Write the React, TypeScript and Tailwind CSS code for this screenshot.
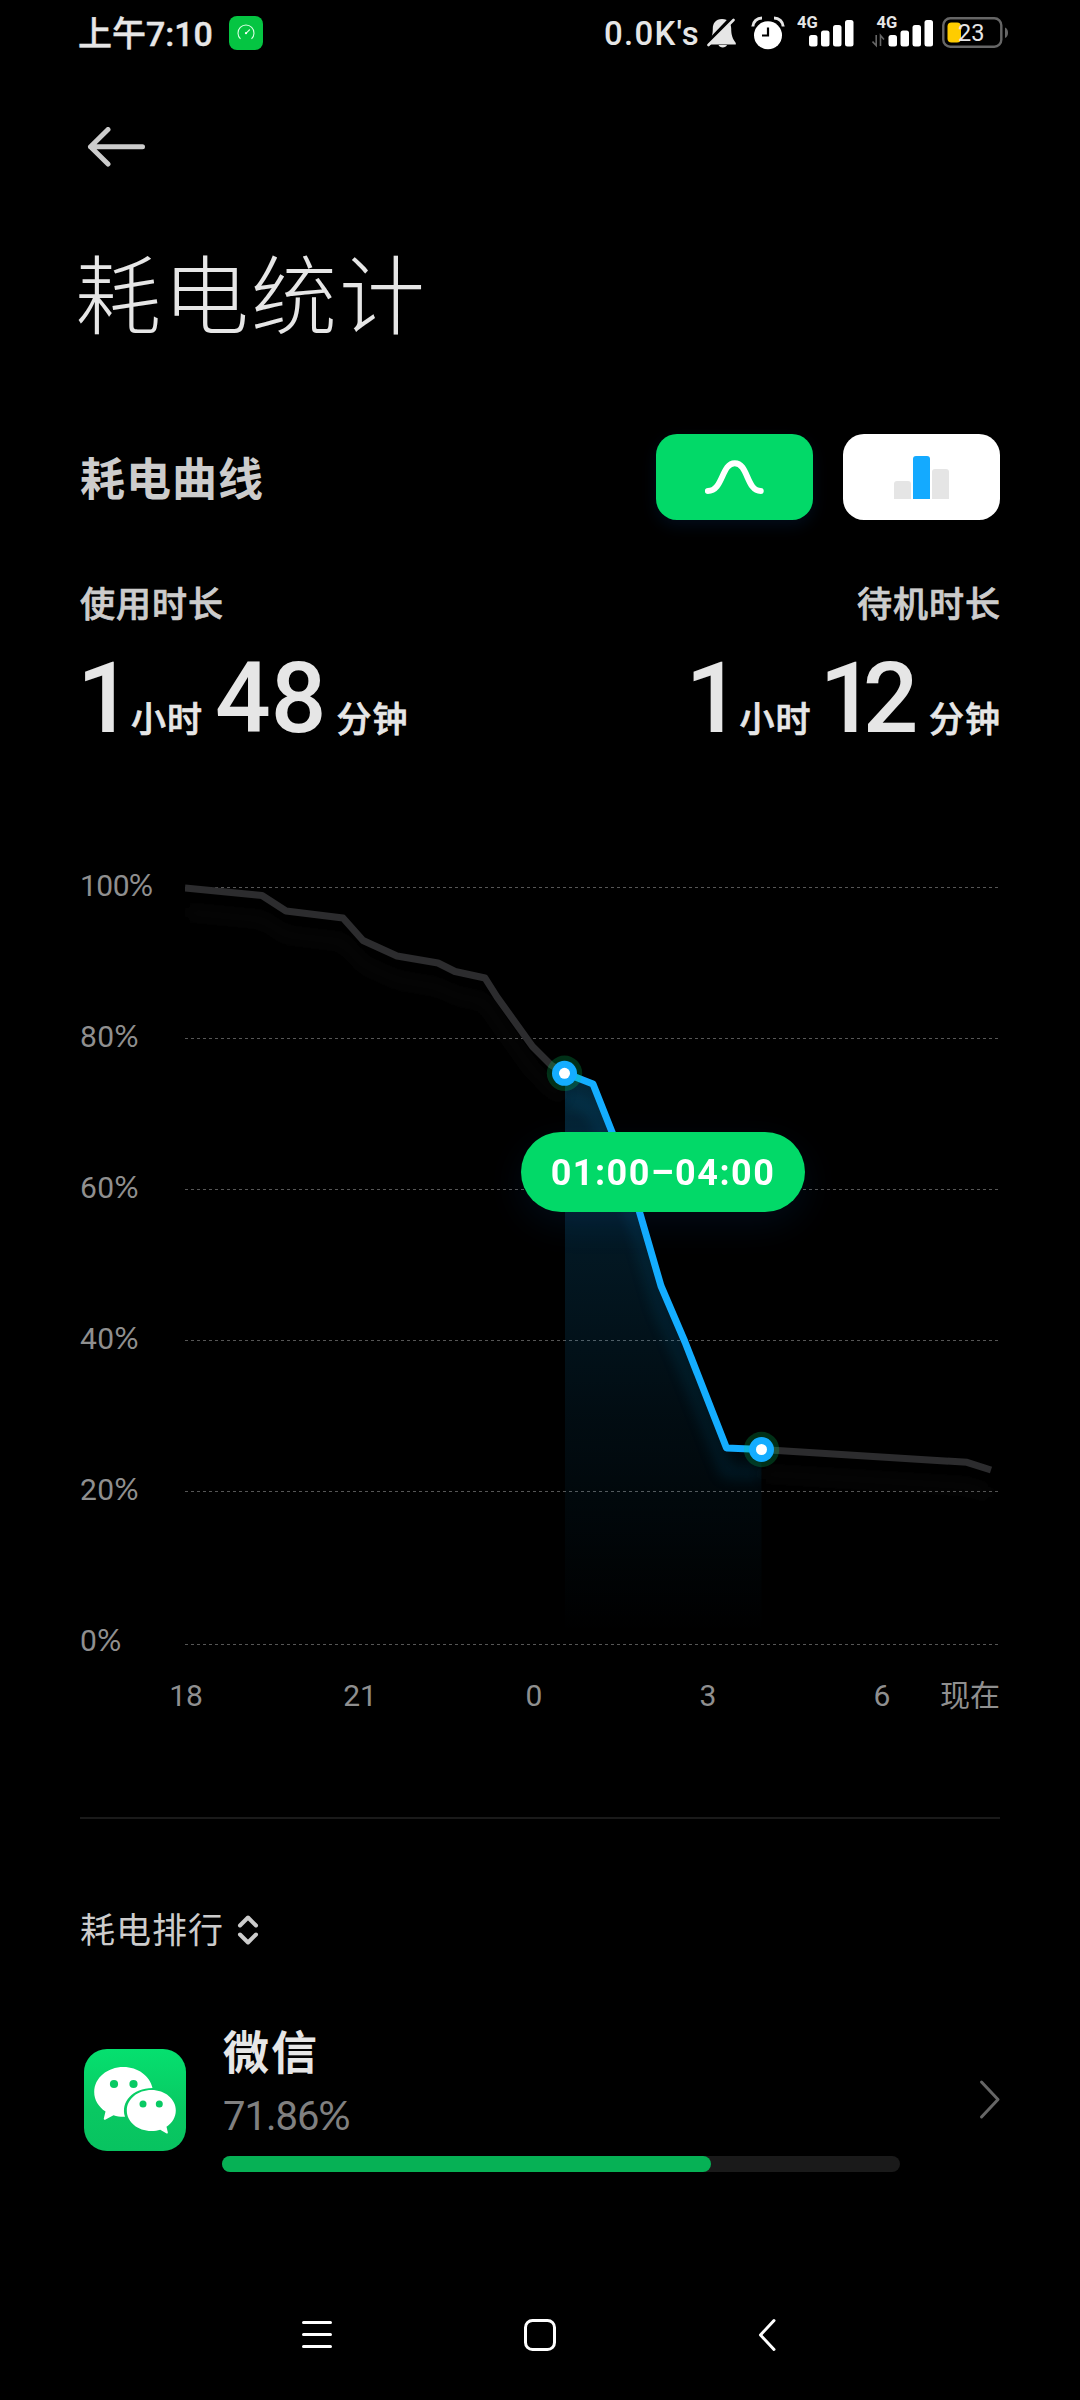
import React from "react";

const percentLabels = [
  { value: "100", tracking: "tracking-[-0.5px]" },
  { value: "80", tracking: "tracking-[0.4px]" },
  { value: "60", tracking: "tracking-[0.4px]" },
  { value: "40", tracking: "tracking-[0.4px]" },
  { value: "20", tracking: "tracking-[0.4px]" },
  { value: "0", tracking: "tracking-[0.4px]" },
];
const gridLines = [19, 170, 321, 472, 623, 776];
const hourLabels = ["18", "21", "0", "3", "6"];

const grayStart =
  "M0 20 L77 27.5 L101 43 L158 50 L178 72.5 L212 88 L253 95 L270 103.5 L300 110 L312 129 L347.5 178.5 L366 197 L380 205";
const bluePath =
  "M380 205 L408 216 L427 264 L440 300 L454.5 344 L476 418 L500 474 L541.5 580 L576.5 581.5";
const grayEnd = "M576.5 581.5 L782 594.3 L806 602";

function SignalBars() {
  return (
    <>
      <rect x="0" y="15" width="8.5" height="11.5" rx="2.5" />
      <rect x="12" y="10.5" width="8.5" height="16" rx="2.5" />
      <rect x="24" y="5" width="8.5" height="21.5" rx="2.5" />
      <rect x="36" y="0" width="8.5" height="26.5" rx="2.5" />
    </>
  );
}

function StatusBar() {
  return (
    <header className="flex h-[66px] items-center pl-[78px] pr-[71px] text-[#e6e6e6]">
      <span className="pt-[2px] text-[34px] font-medium leading-[64px] [-webkit-text-stroke:0.4px]">上午7:10</span>
      <svg className="ml-[16px]" width="34" height="34" viewBox="0 0 34 34" fill="none">
        <rect width="34" height="34" rx="8" fill="#05c542" />
        <path d="M11.5 22.8 A8 8 0 1 1 22.5 22.8" stroke="#d9ffe3" strokeWidth="1.1" />
        <path d="M17 17.3 L20.8 13.5" stroke="#d9ffe3" strokeWidth="1.1" />
        <circle cx="17" cy="17.2" r="1.1" fill="#fff" />
      </svg>
      <div className="ml-auto flex items-center">
        <span className="pt-[2px] text-[33px] font-medium leading-[64px] tracking-[1.2px]">0.0K's</span>
        <svg className="ml-[7px]" width="30" height="32" viewBox="0 0 30 32">
          <path
            d="M15 2 C8.5 2 5.8 6.5 5.8 11.5 C5.8 18 4.5 21.5 1.2 26 V27.6 H28.8 V26 C25.5 21.5 24.2 18 24.2 11.5 C24.2 6.5 21.5 2 15 2 Z M11.5 28 H20 C19 31.3 12.5 31.3 11.5 28 Z"
            fill="#e6e6e6"
          />
          <path d="M0.5 26 L24.5 1" stroke="#000" strokeWidth="4" />
          <path d="M1.5 28 L26.5 3" stroke="#e6e6e6" strokeWidth="2.6" strokeLinecap="round" />
        </svg>
        <svg className="ml-[14px]" width="34" height="34" viewBox="0 0 34 34" fill="none">
          <circle cx="17" cy="19.3" r="14" fill="#fff" />
          <path d="M17 11.5 V19.5 H11" stroke="#000" strokeWidth="2.2" />
          <path d="M1.8 10.5 C2.2 5.5 6 2 11 2" stroke="#e6e6e6" strokeWidth="3" />
          <path d="M32.2 10.5 C31.8 5.5 28 2 23 2" stroke="#e6e6e6" strokeWidth="3" />
        </svg>
        <svg className="ml-[12px]" width="57" height="42" viewBox="0 -4 57 42" fill="#fff">
          <text x="0" y="12.3" className="text-[16.5px] font-bold" fill="#e6e6e6">4G</text>
          <g transform="translate(12 4)"><SignalBars /></g>
        </svg>
        <svg className="ml-[18px]" width="61" height="42" viewBox="0 -4 61 42" fill="#fff">
          <text x="4.5" y="12.3" className="text-[16.5px] font-bold" fill="#e6e6e6">4G</text>
          <path d="M4.2 19 V29.5 L0.5 25.5 M8.5 30 V19.5 L12 23.5" stroke="#666" strokeWidth="1.6" fill="none" />
          <g transform="translate(16.5 4)"><SignalBars /></g>
        </svg>
        <svg className="ml-[9px]" width="67" height="32" viewBox="0 0 67 32" fill="none">
          <rect x="1.3" y="1.3" width="58" height="28.4" rx="7" stroke="#666" strokeWidth="2.4" />
          <rect x="5.5" y="5.5" width="13.5" height="20" rx="4" fill="#fc0" />
          <path d="M63 10.5 C67 12 67 19.5 63 21 Z" fill="#666" />
          <text x="16" y="24.3" className="text-[23.5px]" fill="#e6e6e6">23</text>
        </svg>
      </div>
    </header>
  );
}

function Unit({ children }: { children: string }) {
  return (
    <span className="text-[35px] leading-none tracking-[1px] [-webkit-text-stroke:0.7px]">{children}</span>
  );
}

function Duration({ hours, children }: { hours: string; children: React.ReactNode }) {
  return (
    <div className="flex h-[100px] items-baseline text-[98px] font-medium leading-[100px] text-[#e6e6e6]">
      <span className="-ml-[3px] w-[54px]">{hours}</span>
      <Unit>小时</Unit>
      {children}
      <Unit>分钟</Unit>
    </div>
  );
}

function Marker({ x, y }: { x: number; y: number }) {
  return (
    <g>
      <circle cx={x} cy={y} r="17.7" fill="#00dc68" fillOpacity="0.22" />
      <circle cx={x} cy={y} r="12.5" fill="#14adff" />
      <circle cx={x} cy={y} r="5.5" fill="#fff" />
    </g>
  );
}

function Chart() {
  return (
    <section className="mt-[119px]">
      <div className="relative flex h-[795px]">
        <div className="flex w-[105px] shrink-0 flex-col gap-[115px] text-[30px] leading-[36px] text-[#8f8f8f]">
          {percentLabels.map(({ value, tracking }) => (
            <span key={value} className={"h-[36px] " + tracking}>
              {value}
              <span className="font-['Lato'] leading-none">%</span>
            </span>
          ))}
        </div>
        <svg width="815" height="795" viewBox="0 0 815 795" fill="none" className="shrink-0">
          <defs>
            <linearGradient id="area" x1="0" y1="205" x2="0" y2="766" gradientUnits="userSpaceOnUse">
              <stop offset="0" stopColor="#14adff" stopOpacity="0.23" />
              <stop offset="0.3" stopColor="#14adff" stopOpacity="0.14" />
              <stop offset="0.6" stopColor="#14adff" stopOpacity="0.075" />
              <stop offset="1" stopColor="#14adff" stopOpacity="0" />
            </linearGradient>
            <filter id="soft" x="-10%" y="-20%" width="120%" height="150%">
              <feGaussianBlur stdDeviation="7" />
            </filter>
            <clipPath id="span">
              <path d={bluePath + " V795 H380 Z"} />
            </clipPath>
          </defs>
          {gridLines.map((y) => (
            <path key={y} d={`M0 ${y + 0.5} H813`} stroke="#565656" strokeWidth="1" strokeDasharray="3 3" />
          ))}
          <path d={bluePath + " V770 H380 Z"} fill="url(#area)" />
          <g filter="url(#soft)" strokeWidth="12" strokeOpacity="0.07">
            <path d={grayStart} stroke="#55555a" transform="translate(0 24)" />
            <path d={grayEnd} stroke="#55555a" transform="translate(0 24)" />
          </g>
          <g clipPath="url(#span)">
            <path d={bluePath} stroke="#14adff" strokeWidth="12" strokeOpacity="0.1" transform="translate(0 24)" filter="url(#soft)" />
          </g>
          <g strokeWidth="7" strokeLinejoin="round">
            <path d={grayStart} stroke="#2c2c2e" />
            <path d={grayEnd} stroke="#2c2c2e" />
            <path d={bluePath} stroke="#14adff" />
          </g>
          <Marker x={379.5} y={205.3} />
          <Marker x={576.5} y={581.5} />
        </svg>
        <div className="absolute left-[441px] top-[264px] flex h-[80px] w-[284px] items-center justify-center rounded-full bg-[#02d968] pt-[2px] text-[36px] font-bold tracking-[1.5px] text-white shadow-[0_12px_36px_rgba(20,120,255,0.09)]">
          01:00–04:00
        </div>
      </div>
      <div className="ml-[19px] mt-[13px] flex h-[40px] text-[30px] leading-[40px] text-[#8f8f8f]">
        {hourLabels.map((h) => (
          <span key={h} className="w-[174px] shrink-0 text-center">{h}</span>
        ))}
        <span className="-ml-[29px] whitespace-nowrap text-[30px]">现在</span>
      </div>
    </section>
  );
}

function WeChatIcon() {
  return (
    <svg className="mt-[25px] shrink-0" width="102" height="102" viewBox="0 0 102 102">
      <defs>
        <linearGradient id="wechat" x1="0" y1="0" x2="0" y2="1">
          <stop offset="0" stopColor="#05e06f" />
          <stop offset="0.6" stopColor="#09c862" />
          <stop offset="1" stopColor="#08c360" />
        </linearGradient>
      </defs>
      <rect width="102" height="102" rx="23" fill="url(#wechat)" />
      <path
        d="M39.5 18 C23.5 18 10.2 28.8 10.2 43 C10.2 51 14.5 57.8 21.5 62.5 L19.8 69.5 C19.7 70.8 20.6 71.2 21.6 70.6 L29.5 66.2 C33.5 67.4 37 67.9 41 67.7 C36.5 53 48.5 39.3 68.5 39 C65.8 26.8 53.8 18 39.5 18 Z"
        fill="#fff"
      />
      <path
        d="M67.5 41 C53.8 41 42.8 50 42.8 61.5 C42.8 73 53.8 82 67.5 82 C70.8 82 73.5 81.5 76.2 80.7 L82.2 84.2 C83.3 84.8 84 84.3 83.8 83.2 L82.5 77.8 C88.3 74 91.8 68 91.8 61.5 C91.8 50 81 41 67.5 41 Z"
        fill="#fff"
      />
      <g fill="#08ca63">
        <circle cx="30" cy="35" r="4.1" />
        <circle cx="49.5" cy="35" r="4.1" />
        <circle cx="59" cy="55" r="3.5" />
        <circle cx="75.3" cy="55" r="3.5" />
      </g>
    </svg>
  );
}

export default function App() {
  return (
    <div className="flex h-[2400px] w-[1080px] flex-col overflow-hidden bg-black font-['Roboto','Noto_Sans_CJK_SC',sans-serif]">
      <StatusBar />
      <svg className="ml-[87px] mt-[61px] shrink-0" width="60" height="40" viewBox="0 0 60 40" fill="none">
        <path d="M21 2.5 L3.5 19.7 L21 37 M3.5 19.7 H55.5" stroke="#ccc" strokeWidth="5" strokeLinecap="round" strokeLinejoin="round" />
      </svg>
      <h1 className="ml-[75px] mt-[82px] text-[86px] font-light leading-[100px] tracking-[2px] text-[#e6e6e6]">耗电统计</h1>

      <main className="px-[80px]">
        <div className="mt-[85px] flex h-[86px] items-center">
          <h2 className="mr-auto pt-[8px] text-[45px] font-bold leading-[78px] tracking-[1px] text-[#ccc]">耗电曲线</h2>
          <button className="flex h-[86px] w-[157px] items-center justify-center rounded-[21px] bg-[#02d968] shadow-[0_6px_16px_rgba(20,120,255,0.1)]">
            <svg width="60" height="36" viewBox="0 0 60 36" fill="none">
              <path d="M2.8 32 C18.3 32 16.3 4.2 29.8 4.2 C43.3 4.2 41.3 32 55.8 32" stroke="#fff" strokeWidth="6" strokeLinecap="round" />
            </svg>
          </button>
          <button className="ml-[30px] flex h-[86px] w-[157px] items-end justify-center gap-[2px] rounded-[21px] bg-white pb-[21px]">
            <span className="h-[18px] w-[17px] rounded-t-[3px] bg-[#e5e5e5]" />
            <span className="h-[43px] w-[17px] rounded-t-[3px] bg-[#14aaff]" />
            <span className="h-[30px] w-[17px] rounded-t-[3px] bg-[#e5e5e5]" />
          </button>
        </div>

        <div className="mt-[61px] flex justify-between">
          <div>
            <p className="text-[35px] font-medium leading-[50px] tracking-[1px] text-[#ccc] [-webkit-text-stroke:0.7px]">使用时长</p>
            <div className="mt-[18px]">
              <Duration hours="1">
                <span className="ml-[12px] mr-[10px]">48</span>
              </Duration>
            </div>
          </div>
          <div className="-mr-px flex flex-col items-end">
            <p className="text-[35px] font-medium leading-[50px] tracking-[1px] text-[#ccc] [-webkit-text-stroke:0.7px]">待机时长</p>
            <div className="mt-[18px]">
              <Duration hours="1">
                <span className="ml-[8px] mr-[23px] tracking-[-12.5px]">12</span>
              </Duration>
            </div>
          </div>
        </div>

        <Chart />

        <div className="mt-[101px] h-[2px] bg-[#1a1a1a]" />

        <div className="mt-[87px] flex h-[50px] items-center">
          <span className="pt-px text-[35px] leading-[49px] tracking-[1px] text-[#ccc]">耗电排行</span>
          <svg className="ml-[13px]" width="22" height="32" viewBox="0 0 22 32" fill="none">
            <path d="M3 10.5 L11 2.5 L19 10.5 M3 19.5 L11 27.5 L19 19.5" stroke="#ccc" strokeWidth="4" strokeLinecap="round" strokeLinejoin="round" />
          </svg>
        </div>

        <div className="mt-[68px] flex items-start pl-[4px]">
          <WeChatIcon />
          <div className="ml-[36px] w-[678px] shrink-0">
            <p className="-mt-px pl-[1px] text-[46px] font-bold leading-[60px] tracking-[2px] text-[#e6e6e6]">微信</p>
            <p className="mt-[14px] h-[40px] pl-[1px] text-[40px] leading-[40px] tracking-[-1px] text-[#808080]">
              71.86<span className="font-['Lato'] leading-[30px]">%</span>
            </p>
            <div className="mt-[19px] h-[16px] rounded-full bg-[#1a1a1a]">
              <div className="h-[16px] w-[489px] rounded-full bg-[#06b155]" />
            </div>
          </div>
          <svg className="ml-[79px] mt-[55px] shrink-0" width="22" height="42" viewBox="0 0 22 42" fill="none">
            <path d="M2.5 3 L19 20.5 L2.5 38" stroke="#666" strokeWidth="3" strokeLinecap="round" strokeLinejoin="round" />
          </svg>
        </div>
      </main>

      <nav className="mt-[113px] flex h-[100px] items-center pl-[302px]">
        <svg width="30" height="30" viewBox="0 0 30 30" fill="none">
          <path d="M1.5 2.5 H28.5 M1.5 14.5 H28.5 M1.5 26.5 H28.5" stroke="#fff" strokeWidth="3" strokeLinecap="round" />
        </svg>
        <svg className="ml-[192px]" width="32" height="32" viewBox="0 0 32 32" fill="none">
          <rect x="1.5" y="1.5" width="29" height="29" rx="7" stroke="#fff" strokeWidth="3" />
        </svg>
        <svg className="ml-[202px]" width="18" height="34" viewBox="0 0 18 34" fill="none">
          <path d="M16 2.5 L2.5 17 L16 31.5" stroke="#fff" strokeWidth="3" strokeLinecap="round" strokeLinejoin="round" />
        </svg>
      </nav>
    </div>
  );
}
